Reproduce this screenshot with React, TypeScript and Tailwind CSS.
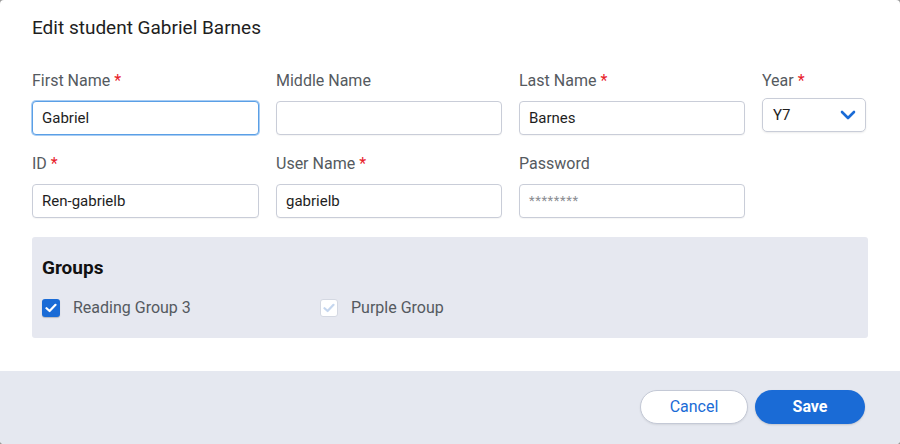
import React from "react";

const font = { fontFamily: "Roboto, 'Liberation Sans', sans-serif" };

function Label({ text, req }: { text: string; req?: boolean }) {
  return (
    <div className="h-[20px] text-[16px] leading-[22px] text-[#555a60]">
      {text}
      {req && <span className="ml-[4px] text-[#e8202a]">*</span>}
    </div>
  );
}

function Field({
  label,
  req,
  value,
  placeholder,
  focused,
}: {
  label: string;
  req?: boolean;
  value?: string;
  placeholder?: string;
  focused?: boolean;
}) {
  return (
    <div className="flex flex-col">
      <Label text={label} req={req} />
      <div
        className={
          "mt-[11px] flex h-[34px] items-center rounded-[4px] border bg-white px-[9px] text-[15px] " +
          (focused
            ? "border-[#5a9fe6] shadow-[0_0_0_1px_#a9cdf3]"
            : "border-[#c9cdd8] shadow-[0_1px_1px_rgba(0,0,0,0.04)]")
        }
      >
        {value ? (
          <span className="text-[#1e1e1e]">{value}</span>
        ) : placeholder ? (
          <span className="text-[13px] tracking-[0.6px] text-[#8a8d92]">{placeholder}</span>
        ) : null}
      </div>
    </div>
  );
}

function CheckIcon({ color }: { color: string }) {
  return (
    <svg width="12" height="10" viewBox="0 0 12 10" fill="none">
      <path d="M1.5 5.2 L4.6 8 L10.5 1.8" stroke={color} strokeWidth="2.2" strokeLinecap="round" strokeLinejoin="round" />
    </svg>
  );
}

export default function App() {
  return (
    <div className="h-[444px] w-[900px] bg-[#9a9a9a]" style={font}>
      <div className="flex h-[444px] w-[900px] flex-col overflow-hidden rounded-[4px] bg-white">
        <div className="px-[32px] pt-[16px]">
          <div className="h-[24px] text-[19px] leading-[24px] text-[#1e1e1e]">Edit student Gabriel Barnes</div>
          <div className="mt-[30px] grid grid-cols-[227px_226px_226px_104px] gap-x-[17px] gap-y-[18px]">
            <Field label="First Name" req value="Gabriel" focused />
            <Field label="Middle Name" />
            <Field label="Last Name" req value="Barnes" />
            <div className="flex flex-col">
              <Label text="Year" req />
              <div className="mt-[8px] flex h-[34px] items-center justify-between rounded-[5px] border border-[#c9cdd8] bg-white pl-[10px] pr-[9px] text-[15px] text-[#1e1e1e] shadow-[0_1px_2px_rgba(0,0,0,0.08)]">
                <span>Y7</span>
                <svg width="16" height="10" viewBox="0 0 16 10" fill="none">
                  <path d="M2 2 L8 8 L14 2" stroke="#1a6bd6" strokeWidth="2.6" strokeLinecap="round" strokeLinejoin="round" />
                </svg>
              </div>
            </div>
            <Field label="ID" req value="Ren-gabrielb" />
            <Field label="User Name" req value="gabrielb" />
            <Field label="Password" placeholder="********" />
            <div />
          </div>
          <div className="mt-[19px] h-[101px] rounded-[3px] bg-[#e6e8f0] px-[10px] pt-[20px]">
            <div className="h-[22px] text-[19px] font-bold leading-[22px] text-[#111]">Groups</div>
            <div className="mt-[17px] flex items-center">
              <div className="flex w-[278px] items-center">
                <div className="flex h-[18px] w-[18px] items-center justify-center rounded-[3px] bg-[#1a6bd6] shadow-[0_1px_1px_rgba(0,0,0,0.2)]">
                  <CheckIcon color="#ffffff" />
                </div>
                <span className="ml-[13px] text-[16px] text-[#555a60]">Reading Group 3</span>
              </div>
              <div className="flex items-center">
                <div className="flex h-[18px] w-[18px] items-center justify-center rounded-[3px] border border-[#d4d8e2] bg-white">
                  <CheckIcon color="#c5d6ee" />
                </div>
                <span className="ml-[13px] text-[16px] text-[#555a60]">Purple Group</span>
              </div>
            </div>
          </div>
        </div>
        <div className="mt-[33px] flex flex-1 items-start justify-end gap-[7px] bg-[#e5e8f0] pr-[35px] pt-[19px]">
          <button className="h-[34px] w-[108px] rounded-full border border-[#c4c9d6] bg-white text-[16px] text-[#1a6bd6] shadow-[0_1px_2px_rgba(0,0,0,0.08)]">
            Cancel
          </button>
          <button className="h-[34px] w-[110px] rounded-full bg-[#1a6bd6] text-[16px] font-bold text-white shadow-[0_1px_2px_rgba(0,0,0,0.15)]">
            Save
          </button>
        </div>
      </div>
    </div>
  );
}
